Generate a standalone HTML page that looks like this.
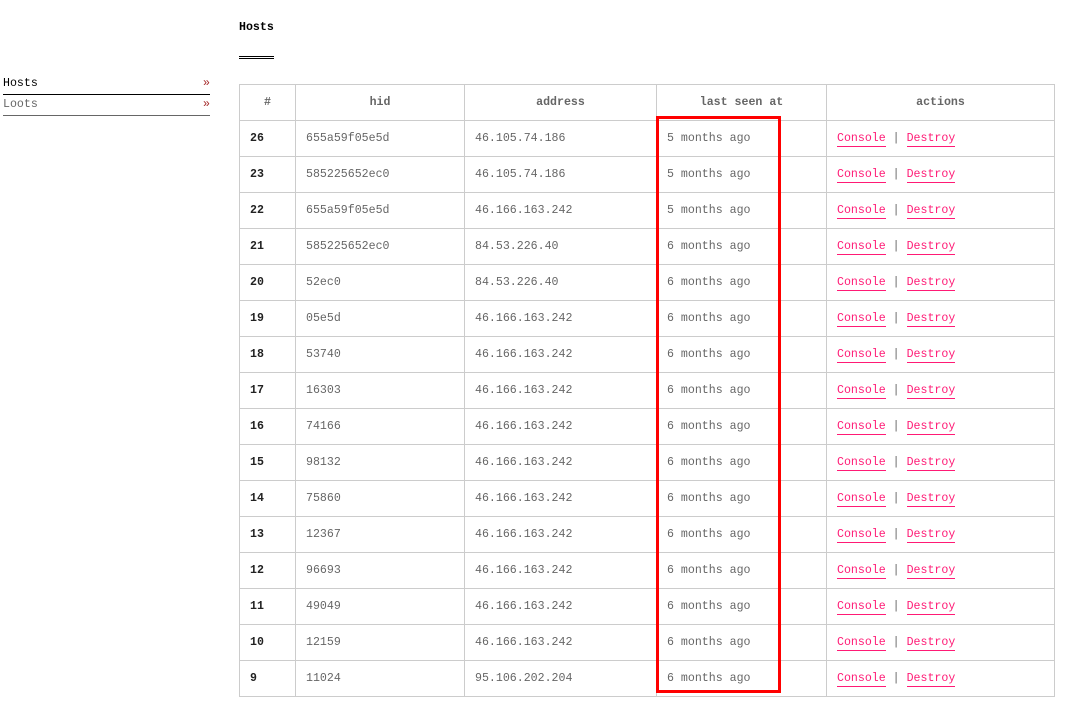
<!DOCTYPE html>
<html><head><style>
body{margin:0;background:#fff;font-family:"Liberation Mono",monospace;font-size:11.6px;color:#666;}
.side{position:absolute;left:3px;top:75px;width:207px;}
.side div{height:19px;line-height:18px;border-bottom:1px solid #000;position:relative;color:#000;}
.side div.l{border-bottom-color:#666;color:#666;height:20px;line-height:19px;}
.side span{position:absolute;right:0;top:0;color:#a52a2a;}
h1{position:absolute;left:239px;top:21px;margin:0;font-size:11.6px;color:#000;font-weight:bold;}
.ul{position:absolute;left:239px;top:56px;width:35px;height:1px;border-top:1px solid #000;border-bottom:1px solid #000;}
table{position:absolute;left:239px;top:84px;border-collapse:collapse;width:816px;}
td,th{border:1px solid #ccc;height:35px;padding:0 10px;text-align:left;}
th{text-align:center;color:#666;font-weight:bold;}
td:first-child{font-weight:bold;color:#222;}
a{color:#ff1a75;text-decoration:none;border-bottom:1px solid #ff1a75;padding-bottom:1px;}
.box{position:absolute;left:656px;top:116px;width:119px;height:571px;border:3px solid #f00;}
</style></head><body>
<div class="side"><div>Hosts<span>»</span></div><div class="l">Loots<span>»</span></div></div>
<h1>Hosts</h1><div class="ul"></div>
<table>
<tr><th style="width:35px">#</th><th style="width:148px">hid</th><th style="width:171px">address</th><th style="width:149px">last seen at</th><th>actions</th></tr>
<tr><td>26</td><td>655a59f05e5d</td><td>46.105.74.186</td><td>5 months ago</td><td><a>Console</a> | <a>Destroy</a></td></tr>
<tr><td>23</td><td>585225652ec0</td><td>46.105.74.186</td><td>5 months ago</td><td><a>Console</a> | <a>Destroy</a></td></tr>
<tr><td>22</td><td>655a59f05e5d</td><td>46.166.163.242</td><td>5 months ago</td><td><a>Console</a> | <a>Destroy</a></td></tr>
<tr><td>21</td><td>585225652ec0</td><td>84.53.226.40</td><td>6 months ago</td><td><a>Console</a> | <a>Destroy</a></td></tr>
<tr><td>20</td><td>52ec0</td><td>84.53.226.40</td><td>6 months ago</td><td><a>Console</a> | <a>Destroy</a></td></tr>
<tr><td>19</td><td>05e5d</td><td>46.166.163.242</td><td>6 months ago</td><td><a>Console</a> | <a>Destroy</a></td></tr>
<tr><td>18</td><td>53740</td><td>46.166.163.242</td><td>6 months ago</td><td><a>Console</a> | <a>Destroy</a></td></tr>
<tr><td>17</td><td>16303</td><td>46.166.163.242</td><td>6 months ago</td><td><a>Console</a> | <a>Destroy</a></td></tr>
<tr><td>16</td><td>74166</td><td>46.166.163.242</td><td>6 months ago</td><td><a>Console</a> | <a>Destroy</a></td></tr>
<tr><td>15</td><td>98132</td><td>46.166.163.242</td><td>6 months ago</td><td><a>Console</a> | <a>Destroy</a></td></tr>
<tr><td>14</td><td>75860</td><td>46.166.163.242</td><td>6 months ago</td><td><a>Console</a> | <a>Destroy</a></td></tr>
<tr><td>13</td><td>12367</td><td>46.166.163.242</td><td>6 months ago</td><td><a>Console</a> | <a>Destroy</a></td></tr>
<tr><td>12</td><td>96693</td><td>46.166.163.242</td><td>6 months ago</td><td><a>Console</a> | <a>Destroy</a></td></tr>
<tr><td>11</td><td>49049</td><td>46.166.163.242</td><td>6 months ago</td><td><a>Console</a> | <a>Destroy</a></td></tr>
<tr><td>10</td><td>12159</td><td>46.166.163.242</td><td>6 months ago</td><td><a>Console</a> | <a>Destroy</a></td></tr>
<tr><td>9</td><td>11024</td><td>95.106.202.204</td><td>6 months ago</td><td><a>Console</a> | <a>Destroy</a></td></tr>
</table>
<div class="box"></div>
</body></html>
